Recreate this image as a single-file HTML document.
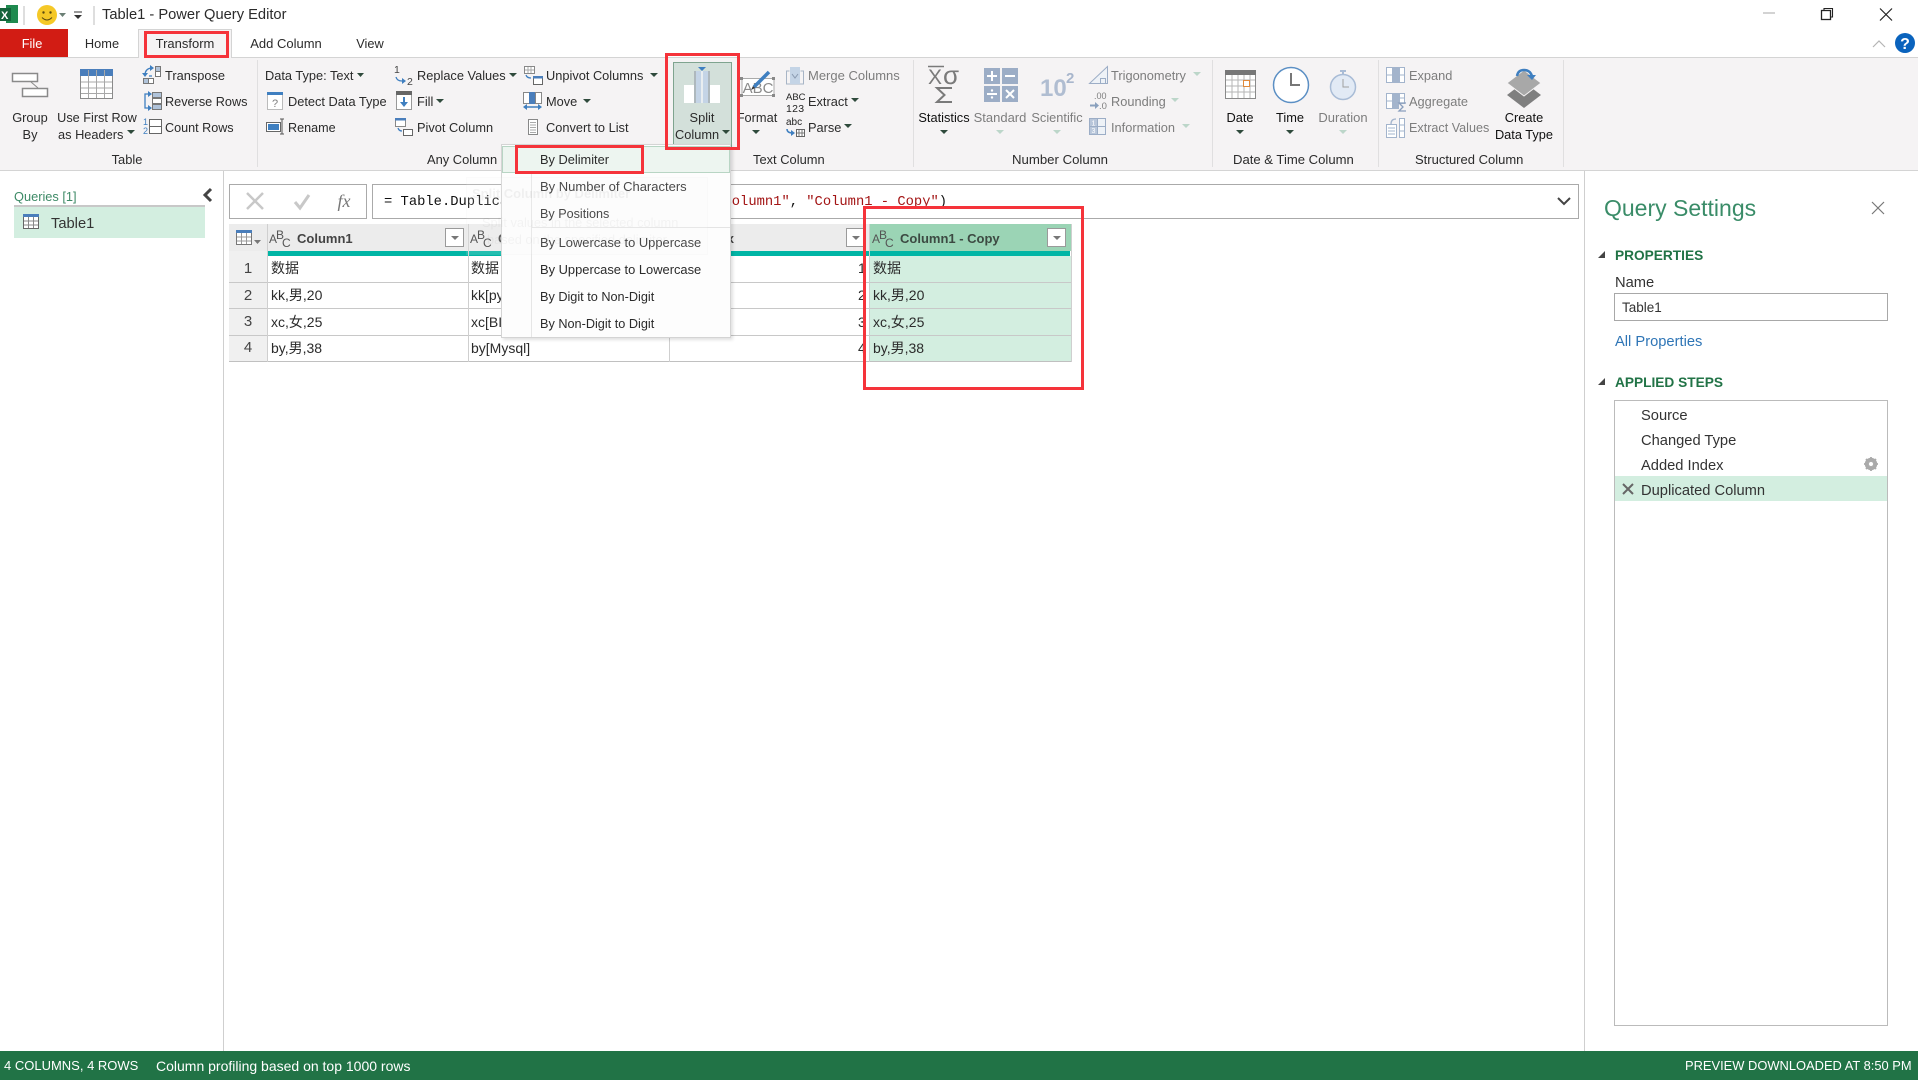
<!DOCTYPE html>
<html><head><meta charset="utf-8"><title>Table1 - Power Query Editor</title>
<style>
html,body{margin:0;padding:0;background:#fff;}
#p{position:relative;width:1918px;height:1080px;overflow:hidden;background:#fff;font-family:"Liberation Sans","Noto Sans CJK SC",sans-serif;font-size:12.8px;color:#2b2b2b;}
#p div,#p span{position:absolute;box-sizing:border-box;}
.t{white-space:nowrap;line-height:20px;height:20px;}
.c{width:200px;text-align:center;}
.f{color:#7d7d7d;font-size:13px;}
.g{font-size:12.9px;}
.cell{font-size:14px;}
.m{font-size:12.9px;color:#2b2b2b;}
.red{border:3px solid #f5333a;}
.num{font-size:15px;color:#444;width:38px;text-align:center;left:229px;}
.s{font-size:14.7px;color:#333;}
svg{position:absolute;left:0;top:0;}
</style></head><body><div id="p">

<!-- ribbon -->
<div style="left:0;top:57px;width:1918px;height:114px;background:#f5f3f4;border-top:1px solid #d4d4d4;border-bottom:1px solid #d4d4d4;"></div>
<div style="left:257px;top:60px;width:1px;height:107px;background:#e0dfe0;"></div>
<div style="left:913px;top:60px;width:1px;height:107px;background:#e0dfe0;"></div>
<div style="left:1212px;top:60px;width:1px;height:107px;background:#e0dfe0;"></div>
<div style="left:1378px;top:60px;width:1px;height:107px;background:#e0dfe0;"></div>
<div style="left:1563px;top:60px;width:1px;height:107px;background:#e0dfe0;"></div>

<!-- tabs -->
<div style="left:0;top:29px;width:68px;height:28px;background:#d21c14;"></div>
<div style="left:138px;top:29px;width:94px;height:29px;background:#f5f3f4;border:1px solid #d4d4d4;border-bottom:none;"></div>
<span class="t c" style="left:-68px;top:34px;color:#fff;">File</span>
<span class="t c" style="left:2px;top:34px;">Home</span>
<span class="t c" style="left:85px;top:34px;font-size:13px;">Transform</span>
<span class="t c" style="left:186px;top:34px;font-size:13px;">Add Column</span>
<span class="t c" style="left:270px;top:34px;">View</span>
<div class="red" style="left:144px;top:31px;width:85px;height:27px;"></div>

<!-- title -->
<span class="t" style="left:102px;top:5px;font-size:14.7px;">Table1 - Power Query Editor</span>

<!-- ribbon text -->
<span class="t" style="left:165px;top:66px;">Transpose</span>
<span class="t" style="left:165px;top:92px;font-size:12.7px;">Reverse Rows</span>
<span class="t" style="left:165px;top:118px;font-size:12.6px;">Count Rows</span>
<span class="t c" style="left:-70px;top:108px;">Group</span>
<span class="t c" style="left:-70px;top:125px;">By</span>
<span class="t c" style="left:-3px;top:108px;font-size:12.7px;">Use First Row</span>
<span class="t" style="left:58px;top:125px;">as Headers</span>
<span class="t c g" style="left:27px;top:150px;">Table</span>

<span class="t" style="left:265px;top:66px;">Data Type: Text</span>
<span class="t" style="left:288px;top:92px;">Detect Data Type</span>
<span class="t" style="left:288px;top:118px;font-size:12.6px;">Rename</span>
<span class="t" style="left:417px;top:66px;">Replace Values</span>
<span class="t" style="left:417px;top:92px;">Fill</span>
<span class="t" style="left:417px;top:118px;">Pivot Column</span>
<span class="t" style="left:546px;top:66px;">Unpivot Columns</span>
<span class="t" style="left:546px;top:92px;">Move</span>
<span class="t" style="left:546px;top:118px;">Convert to List</span>
<span class="t g" style="left:427px;top:150px;">Any Column</span>

<!-- split button -->
<div style="left:673px;top:62px;width:59px;height:86px;background:#d3e0da;border:1px solid #7fa48f;"></div>
<span class="t c" style="left:602px;top:108px;">Split</span>
<span class="t" style="left:675px;top:125px;">Column</span>
<span class="t c" style="left:657px;top:108px;">Format</span>
<span class="t f" style="left:808px;top:66px;">Merge Columns</span>
<span class="t" style="left:808px;top:92px;">Extract</span>
<span class="t" style="left:808px;top:118px;">Parse</span>
<span class="t g" style="left:753px;top:150px;">Text Column</span>

<span class="t c" style="left:844px;top:108px;color:#111;">Statistics</span>
<span class="t c f" style="left:900px;top:108px;">Standard</span>
<span class="t c f" style="left:957px;top:108px;font-size:12.8px;">Scientific</span>
<span class="t f" style="left:1111px;top:66px;font-size:12.8px;">Trigonometry</span>
<span class="t f" style="left:1111px;top:92px;font-size:12.8px;">Rounding</span>
<span class="t f" style="left:1111px;top:118px;font-size:12.8px;">Information</span>
<span class="t" style="left:1012px;top:150px;font-size:13.2px;">Number Column</span>

<span class="t c" style="left:1140px;top:108px;color:#111;">Date</span>
<span class="t c" style="left:1190px;top:108px;color:#111;">Time</span>
<span class="t c f" style="left:1243px;top:108px;">Duration</span>
<span class="t" style="left:1233px;top:150px;font-size:13.1px;">Date &amp; Time Column</span>
<span class="t f" style="left:1409px;top:66px;font-size:12.8px;">Expand</span>
<span class="t f" style="left:1409px;top:92px;font-size:12.8px;">Aggregate</span>
<span class="t f" style="left:1409px;top:118px;font-size:12.6px;">Extract Values</span>
<span class="t c" style="left:1424px;top:108px;color:#111;">Create</span>
<span class="t c" style="left:1424px;top:125px;color:#111;">Data Type</span>
<span class="t" style="left:1415px;top:150px;font-size:13px;">Structured Column</span>

<!-- panel dividers -->
<div style="left:223px;top:171px;width:1px;height:880px;background:#cfcfcf;"></div>
<div style="left:1584px;top:171px;width:1px;height:880px;background:#cfcfcf;"></div>

<!-- queries panel -->
<span class="t" style="left:14px;top:187px;color:#3d8a66;font-size:12.8px;">Queries [1]</span>
<div style="left:14px;top:205px;width:191px;height:2px;background:#c8c8c8;"></div>
<div style="left:14px;top:207px;width:191px;height:31px;background:#d3eee0;"></div>
<span class="t s" style="left:51px;top:214px;">Table1</span>

<!-- formula bar -->
<div style="left:229px;top:184px;width:138px;height:35px;border:1px solid #aaa;background:#fff;"></div>
<div style="left:372px;top:184px;width:1207px;height:35px;border:1px solid #aaa;background:#fff;"></div>
<span class="t" style="left:384px;top:191px;font-family:'Liberation Mono',monospace;font-size:13.8px;color:#111;margin-top:2px;">= Table.DuplicateColumn(<span style="position:static;color:#a31515;">#"Added Index"</span>, <span style="position:static;color:#a31515;">"Column1"</span>, <span style="position:static;color:#a31515;">"Column1 - Copy"</span>)</span>

<!-- grid -->
<div style="left:229px;top:224px;width:841px;height:27px;background:#ececec;"></div>
<div style="left:229px;top:251px;width:38px;height:111px;background:#f0f0f0;"></div>
<div style="left:869px;top:224px;width:203px;height:27px;background:#9bd4b5;"></div>
<div style="left:869px;top:256px;width:203px;height:106px;background:#d3eee0;"></div>
<div style="left:267px;top:251px;width:803px;height:5px;background:#00b5a5;"></div>
<div style="left:229px;top:282px;width:843px;height:1px;background:#c8c8c8;"></div>
<div style="left:229px;top:308px;width:843px;height:1px;background:#c8c8c8;"></div>
<div style="left:229px;top:335px;width:843px;height:1px;background:#c8c8c8;"></div>
<div style="left:229px;top:361px;width:843px;height:1px;background:#c0c0c0;"></div>
<div style="left:267px;top:224px;width:1px;height:138px;background:#cfcfcf;"></div>
<div style="left:468px;top:224px;width:1px;height:138px;background:#cfcfcf;"></div>
<div style="left:669px;top:251px;width:1px;height:111px;background:#cfcfcf;"></div>
<div style="left:869px;top:224px;width:1px;height:138px;background:#cfcfcf;"></div>
<div style="left:1071px;top:224px;width:1px;height:138px;background:#cfcfcf;"></div>

<span class="t" style="left:297px;top:229px;font-weight:bold;font-size:13px;color:#444;">Column1</span>
<span class="t" style="left:498px;top:229px;font-weight:bold;font-size:13px;color:#444;">Column</span>
<span class="t" style="left:700px;top:229px;font-weight:bold;font-size:13px;color:#444;">Index</span>
<span class="t" style="left:900px;top:229px;font-weight:bold;font-size:13px;color:#3c4a42;">Column1 - Copy</span>
<div style="left:445px;top:228px;width:19px;height:19px;background:#fff;border:1px solid #9a9a9a;"></div>
<div style="left:846px;top:228px;width:19px;height:19px;background:#fff;border:1px solid #9a9a9a;"></div>
<div style="left:1047px;top:228px;width:19px;height:19px;background:#fff;border:1px solid #9a9a9a;"></div>

<span class="t num" style="top:259px;">1</span><span class="t num" style="top:286px;">2</span><span class="t num" style="top:312px;">3</span><span class="t num" style="top:338px;">4</span>
<span class="t cell" style="left:271px;top:258px;">数据</span>
<span class="t cell" style="left:271px;top:285px;">kk,男,20</span>
<span class="t cell" style="left:271px;top:312px;">xc,女,25</span>
<span class="t cell" style="left:271px;top:338px;">by,男,38</span>
<span class="t cell" style="left:471px;top:258px;">数据</span>
<span class="t cell" style="left:471px;top:285px;">kk[python]</span>
<span class="t cell" style="left:471px;top:312px;">xc[BI]</span>
<span class="t cell" style="left:471px;top:338px;">by[Mysql]</span>
<span class="t cell" style="left:858px;top:258px;">1</span>
<span class="t cell" style="left:858px;top:285px;">2</span>
<span class="t cell" style="left:858px;top:312px;">3</span>
<span class="t cell" style="left:858px;top:338px;">4</span>
<span class="t cell" style="left:873px;top:258px;">数据</span>
<span class="t cell" style="left:873px;top:285px;">kk,男,20</span>
<span class="t cell" style="left:873px;top:312px;">xc,女,25</span>
<span class="t cell" style="left:873px;top:338px;">by,男,38</span>

<!-- dropdown menu -->
<div style="left:501px;top:144px;width:230px;height:194px;background:#fdfdfd;border:1px solid #d4d4d4;box-shadow:2px 2px 3px rgba(0,0,0,.12);"></div>
<div style="left:531px;top:172px;width:1px;height:165px;background:#e6e6e6;"></div>
<div style="left:531px;top:227px;width:199px;height:1px;background:#e4e4e4;"></div>
<div style="left:502px;top:146px;width:228px;height:27px;background:#edf5f0;border:1px solid #b8d5c4;"></div>
<span class="t m" style="left:540px;top:150px;font-size:12.8px;">By Delimiter</span>
<span class="t m" style="left:540px;top:177px;font-size:13px;">By Number of Characters</span>
<span class="t m" style="left:540px;top:204px;font-size:12.6px;">By Positions</span>
<span class="t m" style="left:540px;top:233px;">By Lowercase to Uppercase</span>
<span class="t m" style="left:540px;top:260px;">By Uppercase to Lowercase</span>
<span class="t m" style="left:540px;top:287px;font-size:12.7px;">By Digit to Non-Digit</span>
<span class="t m" style="left:540px;top:314px;font-size:12.7px;">By Non-Digit to Digit</span>

<!-- ghost tooltip -->
<div style="left:466px;top:177px;width:242px;height:78px;background:rgba(250,250,250,.15);border:1px solid rgba(0,0,0,.012);"></div>
<span class="t" style="left:472px;top:184px;font-weight:bold;font-size:13px;color:rgba(0,0,0,.05);">Split Column by Delimiter</span>
<span class="t" style="left:482px;top:213px;color:rgba(0,0,0,.04);">Split values in the selected column</span>
<span class="t" style="left:487px;top:230px;color:rgba(0,0,0,.04);">based on the specified delimiter.</span>

<!-- red boxes -->
<div class="red" style="left:515px;top:145px;width:129px;height:29px;"></div>
<div class="red" style="left:665px;top:53px;width:75px;height:97px;"></div>
<div class="red" style="left:863px;top:206px;width:221px;height:184px;"></div>

<!-- query settings -->
<span class="t" style="left:1604px;top:198px;font-size:23px;color:#3a8c68;">Query Settings</span>
<span class="t" style="left:1615px;top:246px;font-weight:bold;font-size:13.7px;color:#217346;">PROPERTIES</span>
<span class="t s" style="left:1615px;top:273px;">Name</span>
<div style="left:1614px;top:293px;width:274px;height:28px;border:1px solid #a8a8a8;background:#fff;"></div>
<span class="t" style="left:1622px;top:298px;font-size:13.5px;color:#333;">Table1</span>
<span class="t" style="left:1615px;top:332px;font-size:14.7px;color:#2e75b6;">All Properties</span>
<span class="t" style="left:1615px;top:373px;font-weight:bold;font-size:13.7px;color:#217346;">APPLIED STEPS</span>
<div style="left:1614px;top:400px;width:274px;height:626px;border:1px solid #bbb;background:#fff;"></div>
<div style="left:1615px;top:476px;width:272px;height:25px;background:#d3eee0;"></div>
<span class="t s" style="left:1641px;top:406px;">Source</span>
<span class="t s" style="left:1641px;top:431px;">Changed Type</span>
<span class="t s" style="left:1641px;top:456px;">Added Index</span>
<span class="t s" style="left:1641px;top:481px;">Duplicated Column</span>

<!-- status -->
<div style="left:0;top:1051px;width:1918px;height:29px;background:#217346;"></div>
<span class="t" style="left:4px;top:1056px;color:#fff;font-size:13px;">4 COLUMNS, 4 ROWS</span>
<span class="t" style="left:156px;top:1056px;color:#fff;font-size:14px;">Column profiling based on top 1000 rows</span>
<span class="t" style="left:1685px;top:1056px;color:#fff;font-size:12.9px;">PREVIEW DOWNLOADED AT 8:50 PM</span>

<!-- icons -->
<svg width="1918" height="1080" viewBox="0 0 1918 1080" font-family="Liberation Sans, sans-serif">
<!-- title bar -->
<rect x="6" y="5" width="12" height="18" fill="#1f8a4f"/><rect x="0" y="8" width="11" height="13" fill="#14633a"/>
<text x="1" y="19" font-size="11" font-weight="bold" fill="#fff">X</text>
<path d="M24 6V25M94 6V25" stroke="#bdbdbd"/>
<circle cx="47" cy="15" r="10" fill="#f5c827"/>
<circle cx="43.500" cy="12.500" r="1.200" fill="#5a4a10"/><circle cx="50.500" cy="12.500" r="1.200" fill="#5a4a10"/>
<path d="M42 17.500Q47 22.500 52 17.500" stroke="#5a4a10" fill="none"/>
<path d="M59 13h7l-3.500 4z" fill="#6b7f75"/>
<path d="M74 12h8" stroke="#333"/><path d="M74 15h8l-4 4z" fill="#333"/>
<!-- window buttons -->
<path d="M1763 13h12" stroke="#c4c4c4" stroke-width="1.500"/>
<rect x="1821.500" y="10.500" width="9" height="9" fill="none" stroke="#222" stroke-width="1.300"/>
<path d="M1824 10.500v-2h8.500v8.500h-2" fill="none" stroke="#222" stroke-width="1.100"/>
<path d="M1880 8.500l12 12M1892 8.500l-12 12" stroke="#222" stroke-width="1.200"/>
<path d="M1873 47l6-6 6 6" fill="none" stroke="#b5b5b5" stroke-width="1.200"/>
<circle cx="1905" cy="43" r="10" fill="#0a63bd"/>
<text x="1905" y="49" font-size="16" font-weight="bold" fill="#fff" text-anchor="middle">?</text>

<!-- group by -->
<g fill="#fff" stroke="#8a8a8a" stroke-width="1.500"><rect x="12.500" y="73.500" width="25" height="8"/><rect x="22.500" y="88.500" width="25" height="8"/></g>
<path d="M31 82l7 6" stroke="#8a8a8a"/>
<!-- first row -->
<rect x="80.500" y="69.500" width="32" height="29" fill="#fff" stroke="#8a8a8a"/>
<rect x="80" y="69" width="33" height="7" fill="#4a7ebb"/>
<path d="M88.500 70v28M96.500 70v28M104.500 70v28M81 82h31M81 88h31M81 93.500h31" stroke="#a8a8a8"/>
<!-- transpose -->
<rect x="155.500" y="66.500" width="5" height="5" fill="#b0c3da" stroke="#777"/><rect x="155.500" y="71.500" width="5" height="5" fill="#fff" stroke="#777"/>
<rect x="143.500" y="78.500" width="5" height="5" fill="#b0c3da" stroke="#777"/><rect x="148.500" y="78.500" width="5" height="5" fill="#fff" stroke="#777"/>
<path d="M145 75q0-6 6-7M152 76l-3 0" fill="none" stroke="#3f7fc0" stroke-width="1.300"/><path d="M150 65l4 3-4 3zM142 73l6 0-3 4z" fill="#3f7fc0"/>
<!-- reverse -->
<g stroke="#777"><rect x="152.500" y="92.500" width="9" height="5" fill="#b0c3da"/><rect x="152.500" y="98.500" width="9" height="5" fill="#fff"/><rect x="152.500" y="104.500" width="9" height="5" fill="#b0c3da"/></g>
<path d="M149 94h-4v14h4" fill="none" stroke="#3f7fc0" stroke-width="1.300"/><path d="M148 91l4 3-4 3zM148 105l4 3-4 3z" fill="#3f7fc0"/>
<!-- count -->
<text x="143" y="125" font-size="9" fill="#3f7fc0">1</text><text x="143" y="134" font-size="9" fill="#3f7fc0">2</text>
<rect x="149.500" y="119.500" width="12" height="14" fill="#fff" stroke="#666"/><path d="M150 126.500h11" stroke="#666"/>
<!-- detect -->
<rect x="267.500" y="92.500" width="15" height="17" fill="#fff" stroke="#bbb"/><rect x="267" y="92" width="16" height="3" fill="#3f7fc0"/>
<text x="275" y="107" font-size="11" fill="#7f7f7f" text-anchor="middle">?</text>
<!-- rename -->
<rect x="266.500" y="122.500" width="14" height="9" fill="#fff" stroke="#666"/><rect x="268" y="124" width="11" height="6" fill="#3f7fc0"/><path d="M282 119v15M280 119h4M280 134h4" stroke="#555"/>
<!-- replace -->
<text x="394" y="73" font-size="10.500" fill="#444">1</text><text x="407" y="85" font-size="10.500" fill="#444">2</text>
<path d="M396 77q1 4 6 4" fill="none" stroke="#3f7fc0" stroke-width="1.300"/><path d="M402 78l4 3-4 3z" fill="#3f7fc0"/>
<!-- fill -->
<rect x="396.500" y="92.500" width="15" height="17" fill="#fff" stroke="#999"/><rect x="396" y="91" width="16" height="4" fill="#666"/>
<path d="M404 97v8" stroke="#3f7fc0" stroke-width="2"/><path d="M400 102h8l-4 5z" fill="#3f7fc0"/>
<!-- pivot -->
<rect x="395.500" y="118.500" width="10" height="8" fill="#fff" stroke="#888"/><rect x="395" y="118" width="11" height="2.500" fill="#4a7ebb"/>
<rect x="403.500" y="129.500" width="9" height="6" fill="#fff" stroke="#666"/><path d="M398 128q1 3 4 3" fill="none" stroke="#3f7fc0" stroke-width="1.300"/>
<!-- unpivot -->
<rect x="524.500" y="66.500" width="10" height="7" fill="#fff" stroke="#888"/><path d="M528 67v6M531 67v6M525 70h9" stroke="#aaa"/>
<rect x="533.500" y="76.500" width="9" height="8" fill="#fff" stroke="#666"/><rect x="533" y="76" width="10" height="2.500" fill="#4a7ebb"/><path d="M526 75q1 3 5 3" fill="none" stroke="#3f7fc0" stroke-width="1.300"/>
<!-- move -->
<rect x="523.500" y="92.500" width="6" height="11" fill="#fff" stroke="#888"/><rect x="535.500" y="92.500" width="6" height="11" fill="#fff" stroke="#888"/><rect x="529" y="92" width="6" height="12" fill="#4a7ebb"/>
<path d="M526 107h14" stroke="#3f7fc0" stroke-width="1.500"/><path d="M527 104v6l-4-3zM538 104v6l4-3z" fill="#3f7fc0"/>
<!-- convert to list -->
<rect x="528.500" y="119.500" width="9" height="15" fill="#fff" stroke="#888"/><path d="M530 122.500h6M530 125h6M530 127.500h6M530 130h6M530 132.500h6" stroke="#aaa"/>
<!-- split -->
<rect x="684" y="85" width="10" height="18" fill="#fff"/><rect x="710" y="85" width="10" height="18" fill="#fff"/>
<rect x="694" y="71" width="16" height="32" fill="#aeb8bd"/><rect x="696" y="71" width="12" height="32" fill="#c4d4e6"/><rect x="701" y="71" width="2" height="32" fill="#e8edf0"/>
<path d="M698 67h8l-4 4z" fill="#3f7fc0"/>
<!-- format -->
<rect x="742" y="78.500" width="32" height="17" fill="#fff" stroke="#aaa"/>
<g fill="#888"><rect x="740" y="77" width="3" height="3"/><rect x="772" y="77" width="3" height="3"/><rect x="740" y="94" width="3" height="3"/><rect x="772" y="94" width="3" height="3"/></g>
<text x="758" y="93" font-size="15" fill="#8a8a8a" text-anchor="middle">ABC</text>
<path d="M754 87l15-15" stroke="#3f7fc0" stroke-width="3.500"/><path d="M751 90l2-4 2 2z" fill="#333"/>
<!-- merge -->
<path d="M786.500 84v-13h3M803.500 84v-13h-3M786 84h18" fill="none" stroke="#a8b5c6"/><rect x="790" y="67" width="10" height="17" fill="#c4d4e6"/><path d="M792 74l3 4 3-4" fill="none" stroke="#8a9ab0"/>
<!-- extract / parse -->
<text x="786" y="100" font-size="9.500" fill="#222">ABC</text><text x="786" y="112" font-size="10.500" fill="#222" letter-spacing=".3">123</text>
<text x="786" y="125" font-size="10" fill="#222">abc</text>
<path d="M787 129q0 4 6 4" fill="none" stroke="#3f7fc0" stroke-width="1.500"/><path d="M791 130l4 3-4 3z" fill="#3f7fc0"/>
<rect x="796.500" y="129.500" width="8" height="7" fill="#fff" stroke="#666"/><path d="M799 130v6M802 130v6M797 133h7" stroke="#777"/>
<!-- statistics -->
<path d="M928 66.500h16" stroke="#7a7a7a" stroke-width="1.500"/>
<text x="928" y="84" font-size="21" fill="#7a7a7a">X</text><text x="943" y="84" font-size="26" fill="#7a7a7a">σ</text>
<path d="M952 88h-15l7.500 7-7.500 7h15" fill="none" stroke="#7a7a7a" stroke-width="2"/>
<!-- standard -->
<g fill="#9cadc6"><rect x="984" y="68" width="16" height="16"/><rect x="1002" y="68" width="16" height="16"/><rect x="984" y="86" width="16" height="16"/><rect x="1002" y="86" width="16" height="16"/></g>
<path d="M987 76h10M992 71v10M1005 76h10M987 94h10M1006 90l8 8M1014 90l-8 8" stroke="#fff" stroke-width="2"/>
<circle cx="992" cy="90.500" r="1.200" fill="#fff"/><circle cx="992" cy="97.500" r="1.200" fill="#fff"/>
<!-- scientific -->
<text x="1040" y="96" font-size="24" font-weight="bold" fill="#b0bdd1">10</text>
<text x="1066" y="83" font-size="15" font-weight="bold" fill="#a8b6cc">2</text>
<!-- trig -->
<path d="M1089.500 83.500L1107.500 66.500V83.500Z" fill="#eef2f7" stroke="#9cadc6"/><rect x="1100.500" y="78.500" width="5" height="5" fill="none" stroke="#9cadc6"/>
<!-- rounding -->
<text x="1094" y="99" font-size="9" fill="#7f7f7f">.00</text><path d="M1090 105.500h6" stroke="#8aa0bd" stroke-width="2"/><path d="M1095 102l4 3.500-4 3.500z" fill="#8aa0bd"/><text x="1099" y="109" font-size="9.500" fill="#7f7f7f">.0</text>
<!-- info -->
<rect x="1089.500" y="118.500" width="16" height="16" fill="#eef2f7" stroke="#9cadc6"/><rect x="1090" y="119" width="7.500" height="7.500" fill="#b8c6da"/><rect x="1090" y="126.500" width="7.500" height="7.500" fill="#b8c6da"/>
<path d="M1097.500 119v15M1090 126.500h15" stroke="#9cadc6"/>
<text x="1091.500" y="125.500" font-size="7" fill="#fff">1</text><text x="1091.500" y="133" font-size="7" fill="#fff">3</text>
<!-- date -->
<rect x="1225.500" y="70.500" width="30" height="28" fill="#fff" stroke="#8a8a8a"/><rect x="1225" y="70" width="31" height="5" fill="#777"/>
<path d="M1232 75v23M1238 75v23M1244 75v23M1250 75v23M1226 80h29M1226 86h29M1226 92h29" stroke="#b5b5b5"/>
<rect x="1243.500" y="80.500" width="6" height="6" fill="#fff" stroke="#e08a3c"/>
<!-- time -->
<circle cx="1291" cy="85" r="17.500" fill="#fff" stroke="#5b8fc4" stroke-width="1.500"/><path d="M1291 73v12h9" fill="none" stroke="#777" stroke-width="2"/>
<!-- duration -->
<rect x="1340" y="70" width="6" height="2" fill="#a9bcd6"/><rect x="1342" y="72" width="2" height="3" fill="#a9bcd6"/>
<circle cx="1343" cy="87" r="12.500" fill="#e2eaf5" stroke="#a9bcd6" stroke-width="1.500"/><path d="M1343 79v8h6" fill="none" stroke="#a0a0a0"/>
<!-- expand / aggregate / extract values -->
<g fill="#fff" stroke="#a3b4cc">
<rect x="1386.500" y="67.500" width="12" height="15"/><rect x="1399.500" y="67.500" width="5" height="15"/>
<rect x="1386.500" y="93.500" width="12" height="15"/><rect x="1399.500" y="93.500" width="5" height="10"/>
<rect x="1386.500" y="124.500" width="10" height="13"/><rect x="1399.500" y="118.500" width="5" height="19"/>
</g>
<path d="M1392.500 68v14M1387 75h11M1392.500 94v14M1387 101h11M1400 75h4M1400 98h4M1388 128h7M1388 131h7M1388 134h7M1400 125h4M1400 131h4" stroke="#a3b4cc"/>
<rect x="1393" y="68" width="5" height="14" fill="#a3b4cc"/><rect x="1393" y="94" width="5" height="14" fill="#a3b4cc"/>
<path d="M1406 103h-7l4 4-4 4h7" fill="none" stroke="#8a9fbd" stroke-width="1.300"/>
<path d="M1391 124q0-5 5-5" fill="none" stroke="#a3b4cc" stroke-width="1.300"/>
<!-- create data type -->
<path d="M1524 82l17 13-17 13-17-13z" fill="#7f7f7f"/>
<path d="M1524 70l17 13-17 13-17-13z" fill="#a8a8a8" stroke="#f5f3f4"/>
<path d="M1517 76q1-6 7-6t8 6" fill="none" stroke="#3f7fc0" stroke-width="2.500"/><path d="M1527 75h9l-4 5z" fill="#3f7fc0"/>

<!-- dropdown arrows -->
<g fill="#2f4a3c">
<path d="M357 73h7l-3.500 4zM509 73h8l-4 4zM650 73h8l-4 4zM436 99h8l-4 4zM583 99h8l-4 4zM127 130h8l-4 4zM722 130h8l-4 4zM752 130h8l-4 4zM851 98h8l-4 4zM844 124h8l-4 4zM940 130h8l-4 4zM1236 130h8l-4 4zM1286 130h8l-4 4z"/>
</g>
<g fill="#bcd6c9">
<path d="M996 130h8l-4 4zM1053 130h8l-4 4zM1339 130h8l-4 4zM1193 72h8l-4 4zM1171 98h8l-4 4zM1182 124h8l-4 4z"/>
</g>

<!-- queries -->
<path d="M211 189l-6 6 6 6" fill="none" stroke="#444" stroke-width="3"/>
<rect x="23.500" y="214.500" width="15" height="14" fill="#fff" stroke="#666"/><rect x="23" y="214" width="16" height="3" fill="#4a7ebb"/>
<path d="M28.500 217v11M33.500 217v11M24 221h14M24 225h14" stroke="#888"/>
<!-- formula icons -->
<path d="M247 193l16 16M263 193l-16 16" stroke="#c8c8c8" stroke-width="2.500"/>
<path d="M295 202l5 6 9-13" fill="none" stroke="#c8c8c8" stroke-width="3"/>
<text x="344" y="207" font-family="Liberation Serif, serif" font-style="italic" font-size="18" fill="#777" text-anchor="middle">fx</text>
<path d="M1558 198l6 6 6-6" fill="none" stroke="#444" stroke-width="2"/>
<!-- grid corner -->
<rect x="236.500" y="230.500" width="15" height="14" fill="#fff" stroke="#777"/><rect x="236" y="230" width="16" height="3" fill="#4a7ebb"/>
<path d="M241.500 233v11M246.500 233v11M237 237h14M237 241h14" stroke="#999"/>
<path d="M254 240h7l-3.500 4z" fill="#777"/>
<!-- ABC type icons -->
<g font-size="12" fill="#555" font-weight="normal">
<text x="269" y="243">A</text><text x="276" y="239">B</text><text x="282" y="247">C</text>
<text x="470" y="243">A</text><text x="477" y="239">B</text><text x="483" y="247">C</text>
<text x="872" y="243">A</text><text x="879" y="239">B</text><text x="885" y="247">C</text>
</g>
<!-- filter arrows -->
<path d="M451 236h8l-4 4zM852 236h8l-4 4zM1053 236h8l-4 4z" fill="#777"/>
<!-- query settings icons -->
<path d="M1872 202l12 12M1884 202l-12 12" stroke="#777" stroke-width="1.200"/>
<path d="M1605 251v7h-7zM1605 378v7h-7z" fill="#444"/>
<circle cx="1871" cy="464" r="4.500" fill="none" stroke="#aaa" stroke-width="3.500"/>
<path d="M1871 457v14M1864 464h14M1866 459l10 10M1876 459l-10 10" stroke="#aaa" stroke-width="1.800"/>
<circle cx="1871" cy="464" r="2" fill="#fff"/>
<path d="M1623 484l10 10M1633 484l-10 10" stroke="#666" stroke-width="2"/>
</svg>
</div></body></html>
